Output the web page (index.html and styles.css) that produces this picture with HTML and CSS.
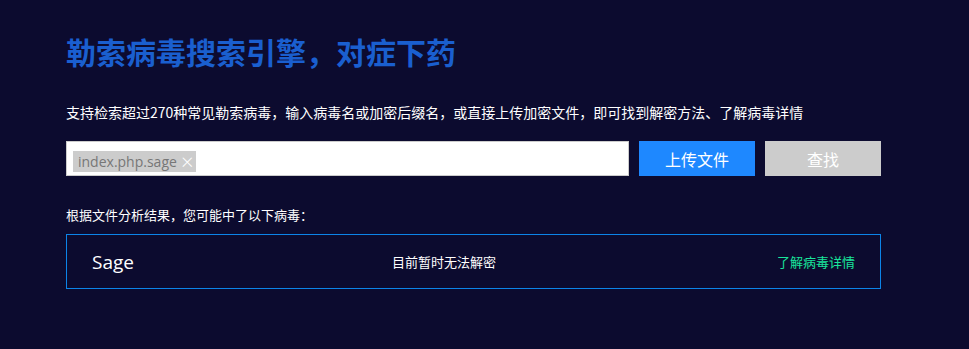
FILE: index.html
```html
<!DOCTYPE html>
<html>
	<head>
		<meta charset="utf-8">
		<title>勒索病毒搜索引擎</title>
		<link rel="stylesheet" href="styles.css">
	</head>
	<body>
		<div class="wrap">
			<h1 class="title">勒索病毒搜索引擎，对症下药</h1>
			<p class="desc">支持检索超过270种常见勒索病毒，输入病毒名或加密后缀名，或直接上传加密文件，即可找到解密方法、了解病毒详情</p>
			<div class="search">
				<div class="input">
					<span class="tag">index.php.sage<i class="close">×</i></span>
				</div>
				<button class="btn upload">上传文件</button>
				<button class="btn find">查找</button>
			</div>
			<p class="tip">根据文件分析结果，您可能中了以下病毒：</p>
			<div class="result">
				<span class="name">Sage</span>
				<span class="state">目前暂时无法解密</span>
				<a class="more" href="#">了解病毒详情</a>
			</div>
		</div>
	</body>
</html>
```

FILE: styles.css
```css
body {
	margin: 0;
	background-color: #0c0b2f;
	font-family: "Microsoft YaHei", "Noto Sans CJK SC", sans-serif;
	color: #fff;
}

.wrap {
	width: 815px;
	padding: 29px 0 0 66px;
}

.title {
	margin: 0;
	font-size: 30px;
	line-height: 44px;
	font-weight: bold;
	color: #1a5fcf;
}

.desc {
	margin: 28px 0 0;
	font-size: 14px;
	line-height: 22px;
}

.search {
	display: flex;
	margin-top: 18px;
	height: 35px;
}

.input {
	width: 563px;
	background: #fff;
	border: 1px solid #ccc;
	box-sizing: border-box;
	padding: 6px;
}

.tag {
	display: inline-flex;
	align-items: center;
	height: 21px;
	padding: 0 3px 0 5px;
	background: #ccc;
	color: #777;
	font-size: 14px;
	font-family: "Open Sans", "Noto Sans CJK SC", sans-serif;
}

.close {
	font-style: normal;
	color: #fff;
	font-size: 22px;
	margin-left: 4px;
	line-height: 21px;
	font-weight: 300;
}

.btn {
	width: 116px;
	height: 35px;
	border: 0;
	margin-left: 10px;
	color: #fff;
	font-size: 16px;
	font-family: inherit;
}

.upload {
	background: #1e88ff;
}

.find {
	background: #cccccc;
}

.tip {
	margin: 28px 0 0;
	font-size: 13px;
	line-height: 22px;
}

.result {
	display: flex;
	align-items: center;
	margin-top: 8px;
	height: 55px;
	box-sizing: border-box;
	border: 1px solid #0c84e8;
	padding: 0 25px;
}

.name {
	width: 300px;
	font-size: 19px;
	font-family: "Open Sans", "Noto Sans CJK SC", sans-serif;
}

.state {
	flex: 1;
	font-size: 13px;
}

.more {
	color: #19e59b;
	font-size: 13px;
	text-decoration: none;
}
```
